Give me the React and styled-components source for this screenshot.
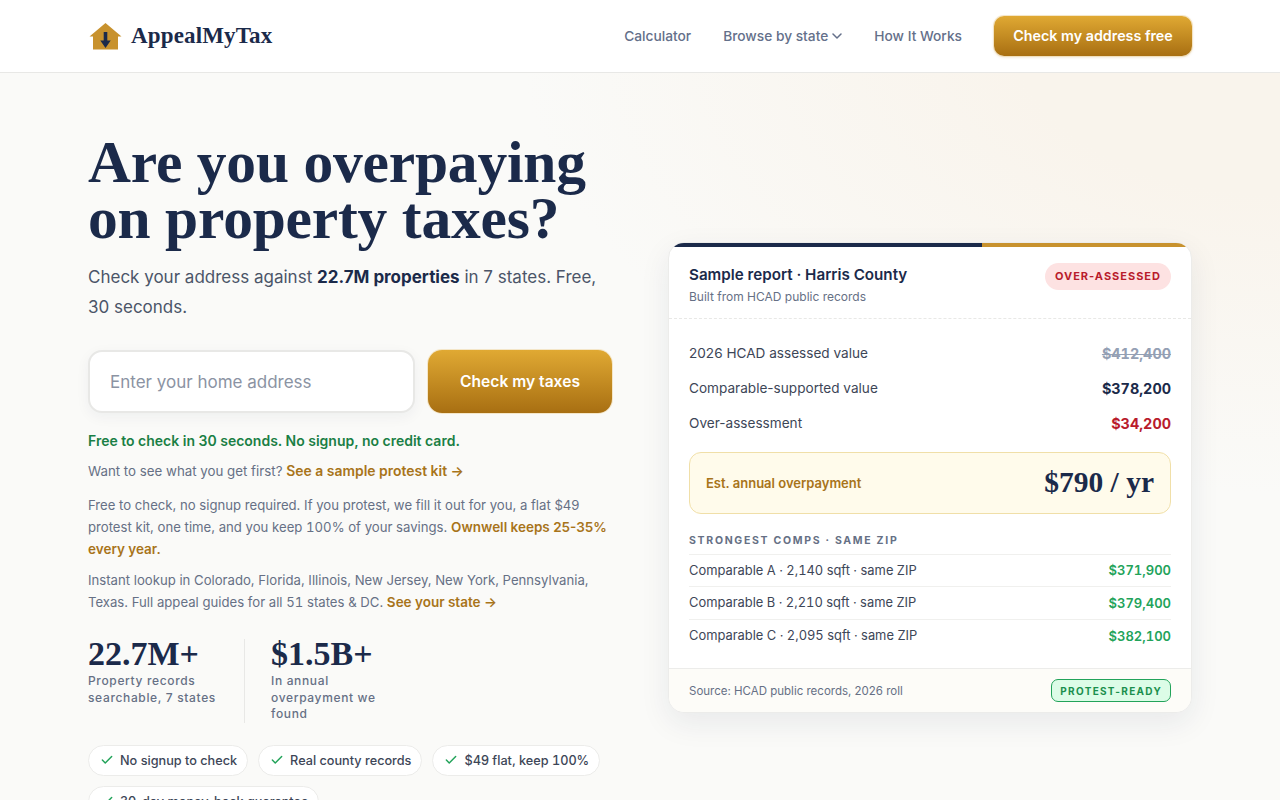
import React from 'react';
import styled, { createGlobalStyle } from 'styled-components';
import { Check } from 'lucide-react';

const serif = '"Liberation Serif", "DejaVu Serif", serif';

const GlobalStyle = createGlobalStyle`
  html, body {
    margin: 0;
    padding: 0;
    height: 800px;
    overflow: hidden;
  }
  body {
    font-family: Inter, "Liberation Sans", sans-serif;
    color: #1b2a4a;
    background: #fafaf8;
  }
  * {
    box-sizing: border-box;
  }
`;

const Nav = styled.header`
  height: 73px;
  background: #fff;
  border-bottom: 1px solid #e8e8e6;
  padding: 0 88px;
  display: flex;
  align-items: center;
  justify-content: space-between;
`;

const Brand = styled.a`
  display: flex;
  align-items: center;
  gap: 9px;
  font-family: ${serif};
  font-weight: 700;
  font-size: 23px;
  color: #1b2a4a;
  letter-spacing: 0.15px;
`;

const NavLinks = styled.nav`
  display: flex;
  align-items: center;
  gap: 32px;
`;

const NavLink = styled.a`
  display: flex;
  align-items: center;
  gap: 4px;
  font-size: 13.76px;
  font-weight: 500;
  color: #64708a;
`;

const goldButton = `
  background: linear-gradient(180deg, #e0a933 0%, #a86f12 100%);
  color: #fff;
  font-weight: 600;
  border: none;
  font-family: Inter, sans-serif;
`;

const NavButton = styled.button`
  ${goldButton}
  height: 40px;
  width: 198px;
  padding: 0 0 1px;
  border-radius: 10px;
  font-size: 14.3px;
  box-shadow: 0 0 0 1px rgba(240, 217, 168, 0.6), 0 1px 3px rgba(168, 111, 18, 0.25);
`;

const Hero = styled.main`
  min-height: 727px;
  padding: 61px 88px 56px;
  display: grid;
  grid-template-columns: minmax(0, 1fr) minmax(0, 1fr);
  gap: 56px;
  align-items: center;
  background:
    radial-gradient(ellipse 760px 460px at 100% -5%, #f9f4ec 0%, #f9f4ec 35%, rgba(249, 244, 236, 0) 100%),
    #fafaf8;
`;

const Left = styled.section`
  display: flex;
  flex-direction: column;
`;

const Title = styled.h1`
  margin: 0 0 16px;
  font-family: ${serif};
  font-size: 59.5px;
  line-height: 56px;
  font-weight: 700;
  letter-spacing: -0.2px;
  color: #1b2a4a;
`;

const Lead = styled.p`
  margin: 0 0 28px;
  font-size: 17px;
  line-height: 30px;
  color: #4b5568;

  strong {
    font-weight: 700;
    color: #1b2a4a;
  }
`;

const AddressForm = styled.form`
  display: flex;
  gap: 13px;
  margin-bottom: 18px;
`;

const AddressInput = styled.input`
  flex: 1;
  min-width: 0;
  height: 63px;
  padding: 0 20px;
  border: 2px solid #e8e8e6;
  border-radius: 14px;
  background: #fff;
  font-family: Inter, sans-serif;
  font-size: 17px;
  box-shadow: 0 4px 14px rgba(27, 42, 74, 0.05);

  &::placeholder {
    color: #8b93a3;
  }
`;

const SubmitButton = styled.button`
  ${goldButton}
  width: 184px;
  height: 63px;
  border-radius: 14px;
  font-size: 15.6px;
  box-shadow: 0 0 0 1px rgba(240, 217, 168, 0.6);
`;

const FreeNote = styled.p`
  margin: 0 0 9px;
  font-size: 14px;
  line-height: 20px;
  font-weight: 600;
  color: #1a7f45;
`;

const SmallText = styled.p`
  margin: 0 0 ${(p) => p.$after}px;
  font-size: ${(p) => p.$size || 13.15}px;
  line-height: 22px;
  color: #667085;
`;

const GoldLink = styled.a`
  font-size: ${(p) => p.$size || 13.5}px;
  font-weight: 600;
  color: #a8741a;
`;

const Num = styled.span`
  font-variant-numeric: tabular-nums;
`;

const Stats = styled.div`
  display: flex;
  margin: 17px 0 22px;
`;

const Stat = styled.div`
  width: ${(p) => p.$width}px;
  padding-left: ${(p) => p.$inset}px;
  border-left: ${(p) => (p.$divider ? '1px solid #e8e8e6' : 'none')};
`;

const StatValue = styled.div`
  font-family: ${serif};
  font-size: 34px;
  line-height: 30px;
  font-weight: 700;
  color: #1b2a4a;
`;

const StatLabel = styled.div`
  margin-top: 4px;
  font-size: 12px;
  line-height: 16.5px;
  font-weight: 500;
  letter-spacing: 0.65px;
  color: #667085;
`;

const Pills = styled.div`
  display: flex;
  flex-wrap: wrap;
  gap: 10px;
  margin-bottom: 4px;
`;

const Pill = styled.span`
  display: inline-flex;
  align-items: center;
  gap: 6px;
  height: 31px;
  padding: 0 10px 0 11px;
  border: 1px solid #ececea;
  border-radius: 999px;
  background: #fff;
  font-size: 12.7px;
  font-weight: 500;
  color: #3d4657;
`;

const Card = styled.aside`
  position: relative;
  border: 1px solid #ececea;
  border-radius: 16px;
  background: #fff;
  overflow: hidden;
  box-shadow: 0 10px 30px rgba(27, 42, 74, 0.08);
`;

const CardStripe = styled.div`
  height: 4px;
  background: linear-gradient(90deg, #1b2a4a 0%, #1b2a4a 60%, #c8922e 60%, #c8922e 100%);
`;

const CardHead = styled.div`
  display: flex;
  justify-content: space-between;
  align-items: flex-start;
  padding: 17.5px 20px 11.5px;
  border-bottom: 1px dashed #e8e8e6;
`;

const CardTitle = styled.div`
  font-size: 15.2px;
  line-height: 22px;
  font-weight: 600;
  color: #1b2a4a;
`;

const CardSub = styled.div`
  margin-top: 2px;
  font-size: 12px;
  line-height: 18px;
  color: #667085;
`;

const RedBadge = styled.span`
  margin-top: -1px;
  padding: 6px 10px;
  border-radius: 999px;
  background: #fde2e2;
  color: #b91c2c;
  font-size: 11px;
  line-height: 15px;
  font-weight: 700;
  letter-spacing: 1px;
`;

const CardBody = styled.div`
  padding: 17px 20px 16px;
`;

const ValueRow = styled.div`
  display: flex;
  justify-content: space-between;
  align-items: center;
  height: 35px;
  font-size: 13.6px;
  color: #3d4657;
`;

const Amount = styled.span`
  font-size: 14.4px;
  font-weight: 700;
  font-variant-numeric: tabular-nums;
  color: ${(p) => p.$color || '#1b2a4a'};
  text-decoration: ${(p) => (p.$struck ? 'line-through' : 'none')};
`;

const Overpayment = styled.div`
  display: flex;
  justify-content: space-between;
  align-items: center;
  height: 62px;
  margin: 11px 0 20px;
  padding: 0 16px;
  border: 1px solid #f0dfa8;
  border-radius: 12px;
  background: #fffbeb;
`;

const OverLabel = styled.span`
  font-size: 13px;
  font-weight: 600;
  color: #a8741a;
`;

const OverValue = styled.span`
  font-family: ${serif};
  font-size: 29.5px;
  font-weight: 700;
  color: #1b2a4a;
`;

const CompsTitle = styled.div`
  padding-bottom: 6px;
  border-bottom: 1px solid #f0f0ee;
  font-size: 10.5px;
  line-height: 14px;
  font-weight: 700;
  letter-spacing: 1.7px;
  color: #667085;
`;

const CompRow = styled.div`
  display: flex;
  justify-content: space-between;
  align-items: center;
  height: 32.5px;
  font-size: 12.9px;
  font-variant-numeric: tabular-nums;
  color: #3d4657;
  border-bottom: ${(p) => (p.$last ? 'none' : '1px solid #f0f0ee')};
`;

const CompPrice = styled.span`
  font-size: 13px;
  font-weight: 600;
  color: #22a35a;
`;

const CardFoot = styled.div`
  display: flex;
  justify-content: space-between;
  align-items: center;
  height: 44px;
  padding: 0 20px;
  border-top: 1px solid #ececea;
  background: #fdfcf8;
`;

const Source = styled.span`
  font-size: 11.5px;
  color: #667085;
`;

const GreenBadge = styled.span`
  padding: 3.5px 8px;
  border: 1px solid #22a35a;
  border-radius: 7px;
  background: #dcfce7;
  color: #1a8f4d;
  font-size: 10px;
  line-height: 14px;
  font-weight: 700;
  letter-spacing: 1.3px;
`;

const LogoIcon = () => (
  <svg width="34" height="27" viewBox="0 0 34 27" aria-hidden="true">
    <path d="M17.5 0 L33.5 13.5 H30 V26.5 H5 V13.5 H1.5 Z" fill="#c8922e" />
    <path d="M15.7 9 H19.3 V17.5 H22.7 L17.5 25 L12.3 17.5 H15.7 Z" fill="#1b2a4a" />
  </svg>
);

const NavChevron = () => (
  <svg width="10" height="8" viewBox="0 0 10 8" aria-hidden="true">
    <path d="M1 2 L5 6 L9 2" fill="none" stroke="currentColor" strokeWidth="1.5" strokeLinecap="round" strokeLinejoin="round" />
  </svg>
);

const comps = [
  ['Comparable A · 2,140 sqft · same ZIP', '$371,900'],
  ['Comparable B · 2,210 sqft · same ZIP', '$379,400'],
  ['Comparable C · 2,095 sqft · same ZIP', '$382,100'],
];

const perks = [
  'No signup to check',
  'Real county records',
  <>
    $49 flat, keep <Num>100%</Num>
  </>,
  '30-day money-back guarantee',
];

export default function App() {
  return (
    <>
      <GlobalStyle />
      <Nav>
        <Brand>
          <LogoIcon />
          AppealMyTax
        </Brand>
        <NavLinks>
          <NavLink>Calculator</NavLink>
          <NavLink>
            Browse by state <NavChevron />
          </NavLink>
          <NavLink>How It Works</NavLink>
          <NavButton>Check my address free</NavButton>
        </NavLinks>
      </Nav>
      <Hero>
        <Left>
          <Title>
            Are you overpaying
            <br />
            on property taxes?
          </Title>
          <Lead>
            Check your address against <strong>22.7M properties</strong> in 7 states. Free, 30 seconds.
          </Lead>
          <AddressForm>
            <AddressInput placeholder="Enter your home address" />
            <SubmitButton type="button">Check my taxes</SubmitButton>
          </AddressForm>
          <FreeNote>Free to check in 30 seconds. No signup, no credit card.</FreeNote>
          <SmallText $after={12} $size={13.3}>
            Want to see what you get first? <GoldLink $size={13.95}>See a sample protest kit →</GoldLink>
          </SmallText>
          <SmallText $after={9}>
            Free to check, no signup required. If you protest, we fill it out for you, a flat $49 protest kit, one
            time, and you keep <Num>100%</Num> of your savings. <GoldLink>Ownwell keeps 25-35% every year.</GoldLink>
          </SmallText>
          <SmallText $after={9}>
            Instant lookup in Colorado, Florida, Illinois, New Jersey, New York, Pennsylvania, Texas. Full appeal
            guides for all <Num>51</Num> states &amp; DC. <GoldLink>See your state →</GoldLink>
          </SmallText>
          <Stats>
            <Stat $width={156} $inset={0}>
              <StatValue>22.7M+</StatValue>
              <StatLabel>Property records searchable, 7 states</StatLabel>
            </Stat>
            <Stat $width={150} $inset={26} $divider>
              <StatValue>$1.5B+</StatValue>
              <StatLabel>In annual overpayment we found</StatLabel>
            </Stat>
          </Stats>
          <Pills>
            {perks.map((perk, i) => (
              <Pill key={i}>
                <Check size={14} color="#22a35a" strokeWidth={2.5} />
                <span>{perk}</span>
              </Pill>
            ))}
          </Pills>
        </Left>
        <Card>
          <CardStripe />
          <CardHead>
            <div>
              <CardTitle>Sample report · Harris County</CardTitle>
              <CardSub>Built from HCAD public records</CardSub>
            </div>
            <RedBadge>OVER-ASSESSED</RedBadge>
          </CardHead>
          <CardBody>
            <ValueRow>
              2026 HCAD assessed value <Amount $color="#94a0b4" $struck>$412,400</Amount>
            </ValueRow>
            <ValueRow>
              Comparable-supported value <Amount>$378,200</Amount>
            </ValueRow>
            <ValueRow>
              Over-assessment <Amount $color="#b91c2c">$34,200</Amount>
            </ValueRow>
            <Overpayment>
              <OverLabel>Est. annual overpayment</OverLabel>
              <OverValue>$790 / yr</OverValue>
            </Overpayment>
            <CompsTitle>STRONGEST COMPS · SAME ZIP</CompsTitle>
            {comps.map(([name, price], i) => (
              <CompRow key={name} $last={i === comps.length - 1}>
                {name}
                <CompPrice>{price}</CompPrice>
              </CompRow>
            ))}
          </CardBody>
          <CardFoot>
            <Source>Source: HCAD public records, 2026 roll</Source>
            <GreenBadge>PROTEST-READY</GreenBadge>
          </CardFoot>
        </Card>
      </Hero>
    </>
  );
}
